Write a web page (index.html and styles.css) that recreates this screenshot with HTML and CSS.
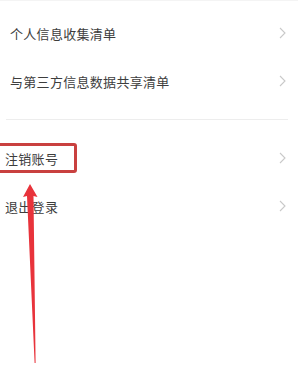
FILE: index.html
```html
<!DOCTYPE html>
<html lang="zh-CN">

<head>
    <meta charset="UTF-8">
    <meta name="viewport" content="width=device-width, initial-scale=1.0">
    <title>设置</title>
    <link rel="stylesheet" href="styles.css">
</head>

<body>
    <div class="page">
        <div class="group top">
            <div class="row">
                <span class="label">个人信息收集清单</span>
                <svg class="arrow-r" width="7" height="12" viewBox="0 0 7 12"><path d="M1 1 L6 6 L1 11" fill="none" stroke="#c9c9c9" stroke-width="1.1"/></svg>
            </div>
            <div class="row">
                <span class="label">与第三方信息数据共享清单</span>
                <svg class="arrow-r" width="7" height="12" viewBox="0 0 7 12"><path d="M1 1 L6 6 L1 11" fill="none" stroke="#c9c9c9" stroke-width="1.1"/></svg>
            </div>
        </div>
        <div class="group bottom">
            <div class="row">
                <span class="label">注销账号</span>
                <svg class="arrow-r" width="7" height="12" viewBox="0 0 7 12"><path d="M1 1 L6 6 L1 11" fill="none" stroke="#c9c9c9" stroke-width="1.1"/></svg>
            </div>
            <div class="row">
                <span class="label">退出登录</span>
                <svg class="arrow-r" width="7" height="12" viewBox="0 0 7 12"><path d="M1 1 L6 6 L1 11" fill="none" stroke="#c9c9c9" stroke-width="1.1"/></svg>
            </div>
        </div>

        <!-- 标注 -->
        <div class="mark-box"></div>
        <svg class="mark-arrow" width="40" height="190" viewBox="0 0 40 190">
            <path d="M20 0 L27.5 13 L23.5 12 L25.6 179 L24.6 179 L17 12 L13 13 Z" fill="#e8333b"/>
        </svg>
    </div>
</body>

</html>
```

FILE: styles.css
```css
* {
    box-sizing: border-box;
}

body {
    margin: 0;
    padding: 0;
    background-color: #fff;
    font-family: "Noto Sans CJK SC", "Noto Sans", sans-serif;
}

.page {
    position: relative;
    width: 298px;
    height: 377px;
    overflow: hidden;
    border-top: 1px solid #f4f4f4;
}

.group {
    padding-top: 8px;
}

.group.top {
    margin: 0 10px 0 6px;
    padding-bottom: 14px;
    border-bottom: 1px solid #ededed;
}

.group.bottom {
    padding-top: 14px;
}

.row {
    height: 48px;
    display: flex;
    align-items: center;
    justify-content: space-between;
    padding: 0 12px 0 5px;
}

.group.top .row {
    margin-left: -1px;
    padding-right: 2px;
}

.label {
    font-size: 13px;
    color: #3d3d3d;
    letter-spacing: 0.3px;
}

/* 红色标注 */
.mark-box {
    position: absolute;
    left: -3px;
    top: 142px;
    width: 80px;
    height: 30px;
    border: 3px solid #c9403f;
    border-radius: 3px;
}

.mark-arrow {
    position: absolute;
    left: 10px;
    top: 183px;
}
```
